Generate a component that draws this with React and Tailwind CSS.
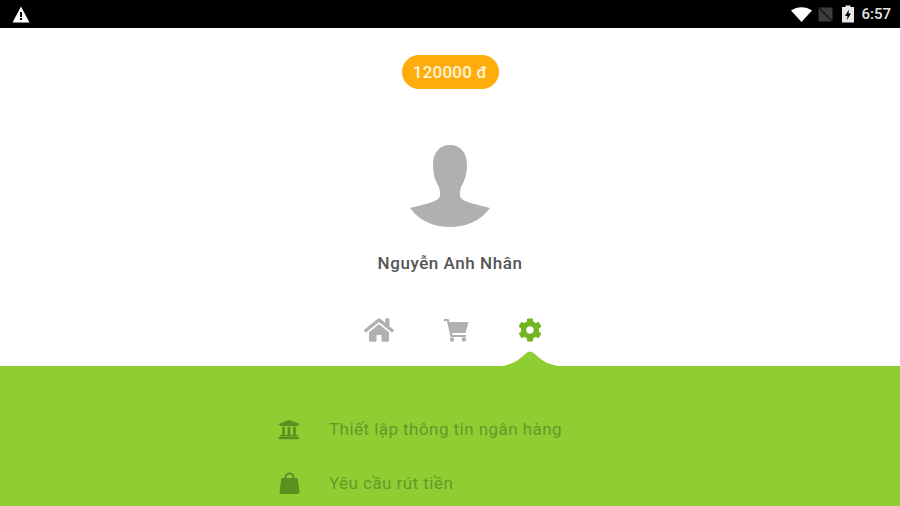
import React from "react";
import { FaHome, FaCog, FaUniversity } from "react-icons/fa";

function Avatar() {
  return (
    <svg width="82" height="84" viewBox="0 0 82 84" className="block">
      <path
        d="M41 0C31 0 24 7 24 20C24 30 27 37 30 42C31 47 32 50 30 53C26 58 11 60 1 63C11 77 27 82 41 82C55 82 71 77 81 63C71 60 56 58 52 53C50 50 51 47 52 42C55 37 58 30 58 20C58 7 51 0 41 0Z"
        fill="#b0b0b0"
      />
    </svg>
  );
}

function Cart() {
  return (
    <svg width="26" height="24" viewBox="0 0 26 24" className="text-[#b0b0b0]" fill="currentColor">
      <path d="M1 1H5.500L6.500 4H25.500L22.500 15H9L9.500 17H23V19H7.500L4 3H1Z" />
      <circle cx="9" cy="21.500" r="2.200" />
      <circle cx="21" cy="21.500" r="2.200" />
    </svg>
  );
}

function Bag() {
  return (
    <svg width="21" height="22" viewBox="0 0 21 22" fill="currentColor">
      <path d="M2.500 6H18.500L20.500 19.500Q20.500 22 18 22H3Q0.500 22 0.500 19.500Z" />
      <path d="M6.500 9V5.500A4 4 0 0 1 14.500 5.500V9" fill="none" stroke="currentColor" strokeWidth="2" />
    </svg>
  );
}

function StatusBar() {
  return (
    <div className="flex h-[28px] shrink-0 items-center justify-between bg-black pl-[12px] pr-[9px]">
      <svg width="18" height="17" viewBox="0 0 18 17">
        <path fillRule="evenodd" d="M9 0.500L17.500 16.500H0.500ZM8 6V11H10V6ZM8 12V14H10V12Z" fill="#fff" />
      </svg>
      <div className="flex items-center">
        <svg width="21" height="15" viewBox="0 0 21 15" className="mr-[6px]">
          <path d="M0 3.500C6 -1 15 -1 21 3.500L10.500 15Z" fill="#fff" />
        </svg>
        <svg width="15" height="15" viewBox="0 0 15 15" className="mr-[9px]">
          <path d="M0.500 14.500V0.500H14.500V14.500Z" fill="#3d3d3d" />
          <path d="M1 1L14.500 14.500" stroke="#111" strokeWidth="1.200" />
        </svg>
        <svg width="12" height="18" viewBox="0 0 12 18" className="mr-[7px]">
          <path fillRule="evenodd" d="M3.500 0.500H8.500V2H12V17.500H0V2H3.500ZM7 4.500L3 11H5.500L5 15L9 8.500H6.500Z" fill="#e8e8e8" />
        </svg>
        <span className="font-['Roboto',sans-serif] text-[15px] font-medium leading-none text-[#e4e4e4]">6:57</span>
      </div>
    </div>
  );
}

function MenuRow({ icon, label }) {
  return (
    <div className="flex h-[54px] items-center">
      <div className="flex w-[22px] justify-center text-[#5c8f20]">{icon}</div>
      <span className="ml-[29px] text-[17px] leading-none tracking-[0.45px] text-[#62992a]">{label}</span>
    </div>
  );
}

export default function App() {
  return (
    <div className="flex h-[506px] w-[900px] flex-col overflow-hidden bg-white font-['Roboto',sans-serif]">
      <StatusBar />
      <div className="flex h-[338px] shrink-0 flex-col items-center">
        <div className="mt-[27px] flex h-[34px] w-[97px] items-center justify-center rounded-full bg-[#ffad0d] text-[17px] font-medium leading-none tracking-[0.2px] text-[#fff4dc]">
          120000 đ
        </div>
        <div className="mt-[56px]">
          <Avatar />
        </div>
        <div className="mt-[24px] text-[17px] font-medium leading-[20px] tracking-[0.55px] text-[#555555]">
          Nguyễn Anh Nhân
        </div>
        <div className="ml-[6px] mt-[42px] flex items-center gap-[49px]">
          <FaHome size={30} className="text-[#b0b0b0]" />
          <Cart />
          <FaCog size={24} className="text-[#72b51f]" />
        </div>
      </div>
      <div className="relative h-[140px] shrink-0 bg-[#8fce33]">
        <svg width="70" height="16" viewBox="0 0 70 16" className="absolute left-[495px] top-[-15px]">
          <path d="M0 16C14 15 23 10 29 4C32 1 34 0.500 35 0.500C36 0.500 38 1 41 4C47 10 56 15 70 16Z" fill="#8fce33" />
        </svg>
        <div className="ml-[278px] pt-[36px]">
          <MenuRow icon={<FaUniversity size={23} />} label="Thiết lập thông tin ngân hàng" />
          <MenuRow icon={<Bag />} label="Yêu cầu rút tiền" />
        </div>
      </div>
    </div>
  );
}
